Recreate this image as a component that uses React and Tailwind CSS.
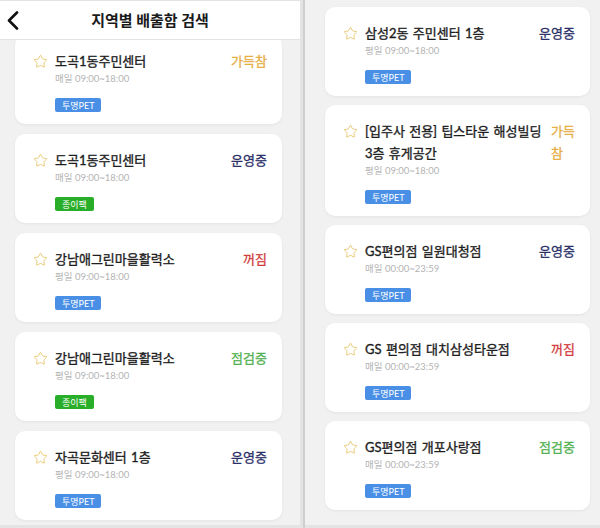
import { Star } from "lucide-react";

const FONT = { fontFamily: 'Lato, "Noto Sans CJK KR", sans-serif' };

const STATUS = {
  full: { label: "가득참", cls: "text-[#e6ae45]" },
  fullWrap: { label: "가득\n참", cls: "text-[#e6ae45]" },
  on: { label: "운영중", cls: "text-[#2b3068]" },
  off: { label: "꺼짐", cls: "text-[#d23b3b]" },
  check: { label: "점검중", cls: "text-[#52b152]" },
};

const BADGE = {
  pet: { label: "투명PET", cls: "bg-[#4a8fe6]" },
  paper: { label: "종이팩", cls: "bg-[#28ae28]" },
};

const leftItems = [
  { name: "도곡1동주민센터", time: "매일 09:00~18:00", badge: "pet", status: "full" },
  { name: "도곡1동주민센터", time: "매일 09:00~18:00", badge: "paper", status: "on" },
  { name: "강남애그린마을활력소", time: "평일 09:00~18:00", badge: "pet", status: "off" },
  { name: "강남애그린마을활력소", time: "평일 09:00~18:00", badge: "paper", status: "check" },
  { name: "자곡문화센터 1층", time: "평일 09:00~18:00", badge: "pet", status: "on" },
];

const rightItems = [
  { name: "삼성2동 주민센터 1층", time: "평일 09:00~18:00", badge: "pet", status: "on" },
  { name: "[입주사 전용] 팁스타운 해성빌딩 3층 휴게공간", time: "평일 09:00~18:00", badge: "pet", status: "fullWrap" },
  { name: "GS편의점 일원대청점", time: "매일 00:00~23:59", badge: "pet", status: "on" },
  { name: "GS 편의점 대치삼성타운점", time: "매일 00:00~23:59", badge: "pet", status: "off" },
  { name: "GS편의점 개포사랑점", time: "매일 00:00~23:59", badge: "pet", status: "check" },
];

const BinCard = ({ item }) => {
  const status = STATUS[item.status];
  const badge = BADGE[item.badge];
  return (
    <div className="bg-white rounded-[10px] shadow-[0_1px_3px_rgba(0,0,0,0.06)] pl-[18px] pr-[15px] pt-[15px] pb-[12px]">
      <div className="flex items-start">
        <div className="h-[22px] w-[15px] mr-[7px] flex items-center shrink-0">
          <Star size={15} strokeWidth={1.3} color="#e3c05c" />
        </div>
        <div className="flex-1 min-w-0">
          <div className="flex items-start justify-between gap-[5px]">
            <p className="flex-1 text-[13px] leading-[22px] text-[#1e1e1e] [-webkit-text-stroke:0.35px] break-keep [word-spacing:1px]">
              {item.name}
            </p>
            <span className={`text-[13px] leading-[22px] [-webkit-text-stroke:0.3px] whitespace-pre-line shrink-0 ${status.cls}`}>
              {status.label}
            </span>
          </div>
          <p className="text-[9.5px] leading-[14px] text-[#b4b4b4]">{item.time}</p>
          <div className={`mt-[12px] flex w-fit items-center h-[14px] px-[7px] rounded-[2px] text-[9px] leading-none text-white ${badge.cls}`}>
            {badge.label}
          </div>
        </div>
      </div>
    </div>
  );
};

export default function App() {
  return (
    <div className="w-[600px] h-[528px] overflow-hidden flex bg-[#f1f1f1]" style={FONT}>
      {/* Left screen */}
      <div className="w-[300px] h-full flex flex-col border-b-[3px] border-[#e4e4e4]">
        <div className="relative z-10 h-[40px] shrink-0 bg-white border-t border-b border-[#e2e2e2] flex items-center px-[6px]">
          <svg width="13" height="19" viewBox="0 0 13 19" fill="none">
            <path d="M11 1.5 L3 9.5 L11 17.5" stroke="#111" strokeWidth="2.6" strokeLinecap="round" strokeLinejoin="round" />
          </svg>
          <h1 className="flex-1 text-center text-[15px] font-bold text-[#1a1a1a] pr-[13px]">지역별 배출함 검색</h1>
        </div>
        <div className="-mt-[5px] pl-[15px] pr-[18px] flex flex-col gap-[10px]">
          {leftItems.map((item, i) => (
            <BinCard key={i} item={item} />
          ))}
        </div>
      </div>

      {/* Divider */}
      <div className="w-[3px] h-full bg-[#e3e3e3]" />
      <div className="w-[2px] h-full bg-[#cfcfcf]" />

      {/* Right screen */}
      <div className="flex-1 h-full pt-[7px] pl-[20px] pr-[10px] flex flex-col gap-[9px] border-b-[3px] border-[#e4e4e4]">
        {rightItems.map((item, i) => (
          <BinCard key={i} item={item} />
        ))}
      </div>
    </div>
  );
}
